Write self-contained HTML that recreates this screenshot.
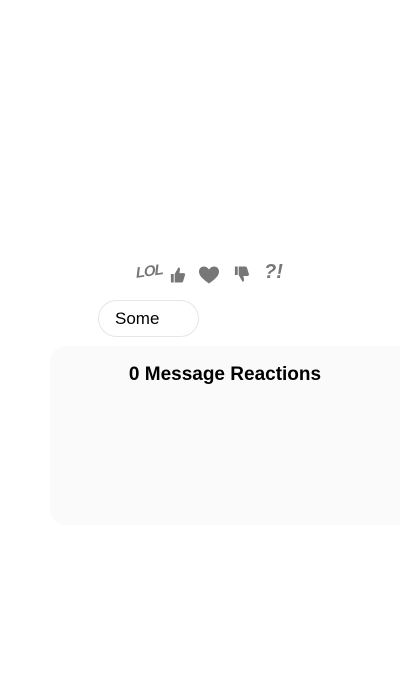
<!DOCTYPE html>
<html><head><meta charset="utf-8"><style>
html,body{margin:0;padding:0;width:400px;height:700px;background:#fff;overflow:hidden;font-family:"Liberation Sans",sans-serif;position:relative}
.r{position:absolute;top:260px;height:24px}
.bubble{position:absolute;left:98px;top:300px;width:101px;height:37px;border:1px solid #e6e6e6;border-radius:19px;box-sizing:border-box;font-size:17px;line-height:35px;padding-left:16px;color:#000}
.panel{position:absolute;left:50px;top:346px;width:370px;height:179px;background:#fafafa;border-radius:16px}
.title{position:absolute;left:50px;width:350px;top:364px;text-align:center;font-weight:bold;font-size:19px;color:#000}
</style></head><body>
<div class="r" style="left:136px;top:263px;font-weight:bold;font-style:italic;font-size:15px;color:#777;transform:rotate(-8deg) skewX(-4deg);letter-spacing:-1px">LOL</div>
<svg class="r" style="left:169px;top:263px" width="17" height="19" viewBox="0 0 18 20"><path d="M2 9h3v9H2z M6 9l4-7c1.5 0 2 1 1.6 2.5L11 8h4.5c1.2 0 1.8 1.2 1.4 2.2l-2 6.5c-.3.8-1 1.3-1.8 1.3H6z" fill="#777"/></svg>
<svg class="r" style="left:198px;top:263px" width="22" height="19" viewBox="0 0 22 19"><path d="M11 18C4 13 1 10 1 6c0-3 2.2-5 5-5 2 0 3.6 1 5 3 1.4-2 3-3 5-3 2.8 0 5 2 5 5 0 4-3 7-10 12z" fill="#777"/></svg>
<svg class="r" style="left:233px;top:263px" width="17" height="19" viewBox="0 0 18 20"><path d="M2 1h3v9H2z M6 1h7c.8 0 1.5.5 1.8 1.3l2 6.5c.4 1-.2 2.2-1.4 2.2H11l.6 3.5c.4 1.5-.1 2.5-1.6 2.5L6 10z" fill="#777"/></svg>
<div class="r" style="left:264px;top:261px;font-weight:bold;font-style:italic;font-size:20px;color:#777">?!</div>
<div class="bubble">Some</div>
<div class="panel"></div>
<div class="title">0 Message Reactions</div>
</body></html>
